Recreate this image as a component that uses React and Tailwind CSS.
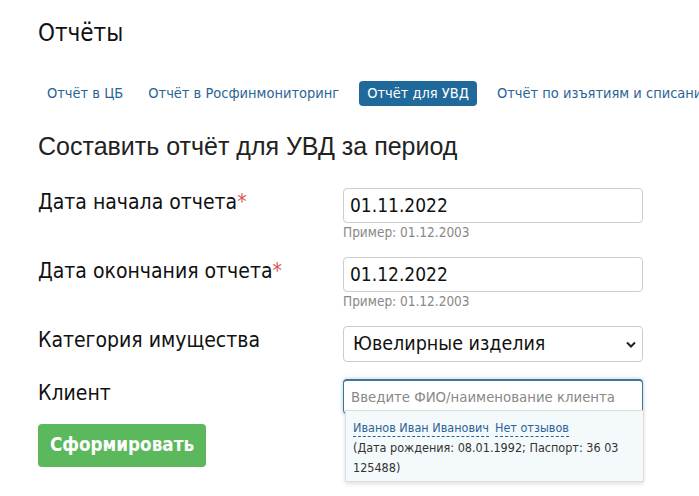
import React from "react";

const tahoma = { fontFamily: '"DejaVu Sans", Verdana, sans-serif' };

function Row({ label, required, children, hint }) {
  return (
    <div className="flex">
      <div className="w-[305px] shrink-0 pt-[1px] text-[21px] leading-[26px] text-[#111] font-stretch-condensed">
        {label}
        {required && <span className="text-[#d9534f]">*</span>}
      </div>
      <div className="w-[300px]">
        {children}
        {hint && (
          <div className="text-[13.5px] leading-[16px] text-[#888] font-stretch-condensed mt-[1px]">{hint}</div>
        )}
      </div>
    </div>
  );
}

export default function App() {
  return (
    <div className="w-[699px] h-[496px] bg-white overflow-hidden relative" style={tahoma}>
      <div className="pl-[38px]">
        <h1 className="pt-[18px] text-[24px] leading-[30px] text-[#111] font-stretch-condensed">Отчёты</h1>

        <div className="mt-[33px] flex whitespace-nowrap text-[14.5px] leading-[17px] font-stretch-condensed">
          <span className="ml-[1px] px-[8px] py-[4px] text-[#2a6496] rounded">Отчёт в ЦБ</span>
          <span className="ml-[9px] px-[8px] py-[4px] text-[#2a6496] rounded">Отчёт в Росфинмониторинг</span>
          <span className="ml-[12px] px-[8px] py-[4px] text-white bg-[#1f6a9a] rounded-[4px]">Отчёт для УВД</span>
          <span className="ml-[12px] px-[8px] py-[4px] text-[#2a6496] rounded">Отчёт по изъятиям и списаниям</span>
        </div>

        <h2
          className="mt-[25px] text-[25px] leading-[30px] text-[#222]"
          style={{ fontFamily: '"Liberation Sans", Arial, sans-serif' }}
        >
          Составить отчёт для УВД за период
        </h2>

        <div className="mt-[27px] flex flex-col gap-[17px]">
          <Row label="Дата начала отчета" required hint="Пример: 01.12.2003">
            <div className="h-[35px] border border-[#ccc] rounded-[4px] px-[6px] flex items-center text-[19px] text-[#111] font-stretch-condensed">
              01.11.2022
            </div>
          </Row>
          <Row label="Дата окончания отчета" required hint="Пример: 01.12.2003">
            <div className="h-[35px] border border-[#ccc] rounded-[4px] px-[6px] flex items-center text-[19px] text-[#111] font-stretch-condensed">
              01.12.2022
            </div>
          </Row>
          <Row label="Категория имущества">
            <div className="h-[36px] border border-[#ccc] rounded-[4px] pl-[9px] pr-[6px] flex items-center justify-between text-[19.5px] text-[#111] font-stretch-condensed">
              <span>Ювелирные изделия</span>
              <svg width="10" height="7" viewBox="0 0 10 7">
                <path d="M1 1.5 L5 5.5 L9 1.5" fill="none" stroke="#222" strokeWidth="2" />
              </svg>
            </div>
          </Row>
          <Row label="Клиент">
            <div className="relative">
              <div className="h-[35px] border border-[#3f7597] border-t-2 rounded-[4px] px-[7px] flex items-center text-[14.8px] text-[#888] font-stretch-condensed shadow-[0_0_4px_rgba(63,117,151,0.4)]">
                Введите ФИО/наименование клиента
              </div>
            </div>
          </Row>
        </div>

        <button className="mt-[10px] w-[168px] h-[43px] rounded-[4px] bg-[#5cb85c] text-white font-bold text-[18.7px] font-stretch-condensed">
          Сформировать
        </button>
      </div>

      <div className="absolute left-[345px] top-[410px] w-[299px] h-[72px] bg-[#f4f9fc] border border-[#ddd] shadow-[0_2px_4px_rgba(0,0,0,0.12)] px-[7px] pt-[8px] text-[12.5px] leading-[20px] font-stretch-condensed">
        <div className="flex gap-[6px] text-[#2a6496]">
          <span className="border-b border-dashed border-[#2a6496] leading-[17px]">Иванов Иван Иванович</span>
          <span className="border-b border-dashed border-[#2a6496] leading-[17px]">Нет отзывов</span>
        </div>
        <div className="text-[#333] mt-[1px]">(Дата рождения: 08.01.1992; Паспорт: 36 03 125488)</div>
      </div>
    </div>
  );
}
